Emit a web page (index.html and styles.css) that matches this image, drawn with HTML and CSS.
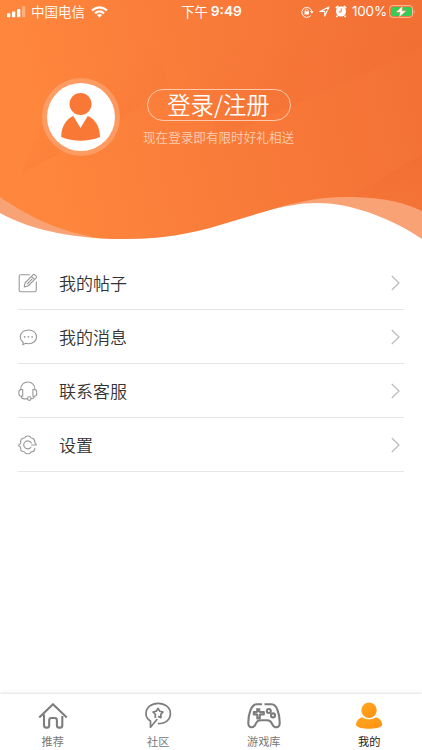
FILE: index.html
```html
<!DOCTYPE html>
<html lang="zh-CN">
<head>
<meta charset="utf-8">
<title>我的</title>
<link rel="stylesheet" href="styles.css">
</head>
<body>
<div class="app">
  <header class="hero">
    <svg class="hero-bg" viewBox="0 0 422 244" preserveAspectRatio="none" aria-hidden="true">
      <defs>
        <linearGradient id="base" gradientUnits="userSpaceOnUse" x1="20" y1="140" x2="410" y2="50">
          <stop offset="0" stop-color="#ff873d"/><stop offset=".5" stop-color="#f97b39"/><stop offset="1" stop-color="#f37135"/>
        </linearGradient>
        <linearGradient id="ray" gradientUnits="userSpaceOnUse" x1="230" y1="40" x2="270" y2="122">
          <stop offset="0" stop-color="#ee6830" stop-opacity="0"/><stop offset="1" stop-color="#ee6830" stop-opacity=".2"/>
        </linearGradient>
        <linearGradient id="fold" gradientUnits="userSpaceOnUse" x1="62" y1="90" x2="91" y2="140">
          <stop offset="0" stop-color="#f16c31" stop-opacity="0"/><stop offset="1" stop-color="#f16c31" stop-opacity=".16"/>
        </linearGradient>
        <linearGradient id="corner" gradientUnits="userSpaceOnUse" x1="380" y1="176" x2="392" y2="205">
          <stop offset="0" stop-color="#ee682e" stop-opacity=".25"/><stop offset="1" stop-color="#ee682e" stop-opacity="0"/>
        </linearGradient>
        <clipPath id="front"><path d="M0 0H422V211C397 199 371 197 345 197C322 197 302 201 280 207L210 228C180 236 155 239 122 239C104 239 94 238 84 235C50 228 20 211 0 197Z"/></clipPath>
      </defs>
      <path fill="#f9a276" d="M0 0H422V239C396 221 354 203 318 203C260 203 208 239 122 239C78 239 32 231 0 213Z"/>
      <g clip-path="url(#front)">
        <path fill="url(#base)" d="M0 0H422V244H0Z"/>
        <path fill="url(#ray)" d="M150 0H422V48L292 106L220 137Z"/>
        <path fill="url(#fold)" d="M60 80L150 40L170 85L120 120L20 175Z"/>
        <path fill="url(#corner)" d="M422 154L350 198L422 212Z"/>
      </g>
    </svg>

    <div class="status">
      <div class="status-left">
        <svg class="signal" width="19" height="12" viewBox="0 0 19 12"><g fill="#fff"><rect y="7.2" width="3.3" height="4" rx=".8"/><rect x="5" y="5.5" width="3.3" height="5.7" rx=".8"/><rect x="10" y="3" width="3.3" height="8.2" rx=".8"/><rect x="15" y=".3" width="3.3" height="10.9" rx=".8" opacity=".35"/></g></svg>
        <span class="carrier">中国电信</span>
        <svg class="wifi" width="17" height="12" viewBox="0 0 17 12"><g fill="none" stroke="#fff" stroke-width="2.2"><path d="M1 4.4Q8.5-1.8 16 4.4"/><path d="M3.9 7.3Q8.5 3.6 13.1 7.3"/></g><path fill="#fff" d="M5.9 9Q8.5 7 11.1 9L8.5 11.7Z"/></svg>
      </div>
      <div class="clock"><span>下午</span><b>9:49</b></div>
      <div class="status-right">
        <svg class="lock" width="13" height="12" viewBox="0 0 13 12"><g fill="none" stroke="#fff"><path d="M9.7 9.6A5 5 0 1 1 10.7 5"/><path d="M4.3 5.7V4.5a1.4 1.4 0 0 1 2.8 0v1.2" stroke-width=".8"/></g><path fill="#fff" d="M3.5 5.3h4.4v3.3H3.5zM8.9 5.2h3.7l-1.8 2.5z"/></svg>
        <svg class="arrow" width="11" height="11" viewBox="0 0 11 11"><path fill="none" stroke="#fff" stroke-width="1.1" stroke-linejoin="round" d="M.8 5.4L10 1 5.7 10.1V5.4Z"/></svg>
        <svg class="alarm" width="12" height="13" viewBox="0 0 12 13"><circle cx="6" cy="6.6" r="5" fill="#fff"/><path d="M.9 3.2L3.3 1M11.1 3.2L8.7 1M2.4 10.8L1.4 12M9.6 10.8l1 1.2" stroke="#fff" stroke-width="1.8"/><path d="M6.2 3.4v3.5H3.5" fill="none" stroke="#f67637"/></svg>
        <span class="percent">100%</span>
        <svg class="battery" width="27" height="13" viewBox="0 0 27 13"><rect x=".6" y=".6" width="23" height="11.8" rx="3.2" fill="none" stroke="#fbc0a0"/><rect x="2" y="2" width="20.2" height="9" rx="1.8" fill="#32cc57"/><path d="M24.8 4.4q1.6 2 0 4.2z" fill="#fbc0a0"/><path fill="#fff" stroke="#f67637" stroke-width=".5" d="M13.8.8L6.8 7.3H11L9.9 12.4 17.4 5.7H13Z"/></svg>
      </div>
    </div>

    <div class="profile">
      <div class="avatar">
        <svg width="68" height="68" viewBox="0 0 68 68"><circle cx="34" cy="34" r="34" fill="#fff"/><g fill="#f97836"><circle cx="33.5" cy="21" r="11"/><path d="M26.3 33L33.5 45 40.8 33C48 36 53 43.5 53 54Q33.5 61.5 14.2 54C14.2 43.5 19.4 36 26.3 33Z"/></g></svg>
      </div>
      <div class="login">
        <a class="login-btn">登录/注册</a>
        <p class="login-tip">现在登录即有限时好礼相送</p>
      </div>
    </div>
  </header>

  <main class="menu">
    <a class="row">
      <svg class="row-icon" viewBox="0 0 20 20"><path d="M11.5 1.8H3Q1.2 1.8 1.2 3.6V17Q1.2 18.8 3 18.8H16.5Q18.3 18.8 18.3 17V9"/><path d="M6.2 13.9L7 10 15.2 1.7Q16 1 16.8 1.8L18.2 3.2Q18.9 4 18.2 4.8L10 13 6.2 13.9ZM13.6 3.4L16.5 6.3M9.4 10.8L14 6.2"/></svg>
      <span class="row-label">我的帖子</span>
      <svg class="chevron" viewBox="0 0 9 16"><path d="M.8 1L8 8 .8 15"/></svg>
    </a>
    <a class="row">
      <svg class="row-icon" viewBox="0 0 20 20"><path d="M5.2 15.2C3.2 13.9 2.2 12 2.2 9.8 2.2 5.9 6 3 10.5 3S18.6 5.9 18.6 9.8 15 16.7 10.5 16.7Q9 16.7 7.7 16.3L4.7 17.7Z"/><path class="dots" d="M6.7 9.8h.01M10.4 9.8h.01M14.1 9.8h.01"/></svg>
      <span class="row-label">我的消息</span>
      <svg class="chevron" viewBox="0 0 9 16"><path d="M.8 1L8 8 .8 15"/></svg>
    </a>
    <a class="row">
      <svg class="row-icon" viewBox="0 0 20 20"><path d="M2.6 8.7C2.6 4.1 5.6 1 9.8 1S17 4.1 17 8.7"/><path d="M4.7 8.5V15.2H3.3Q.9 15.2.9 12.8V10.8Q.9 8.6 3.2 8.5ZM14.9 8.5V15.2H16.3Q18.7 15.2 18.7 12.8V10.8Q18.7 8.6 16.4 8.5ZM3.2 15.2Q3.4 17.9 6.2 17.9H9.4M13.2 17.7Q16.1 17.6 16.4 15.2"/><circle cx="11.3" cy="17.6" r="1.8"/></svg>
      <span class="row-label">联系客服</span>
      <svg class="chevron" viewBox="0 0 9 16"><path d="M.8 1L8 8 .8 15"/></svg>
    </a>
    <a class="row">
      <svg class="row-icon" viewBox="0 0 20 20"><path d="M18.2 10H13.6M18.2 10Q18 8.2 16.8 7.6 17 4 14.3 3.2 12.6 3.4 12 1.6 9.8.5 7.6 1.6 7 3.4 5 3.2 2.5 4 2.6 7.1 3.2 8.5.9 9.8.7 10.2.7 11 2.7 11.5 2.5 13 2.4 15.8 4.7 16.5 6.7 16.3 7.4 18.2 9.8 19.4 12 18.2 12.9 16.3 14.9 16.7 17 15.7 16.8 13.2"/><path d="M13.3 8.1A4 4 0 1 0 12.9 12.3"/></svg>
      <span class="row-label">设置</span>
      <svg class="chevron" viewBox="0 0 9 16"><path d="M.8 1L8 8 .8 15"/></svg>
    </a>
  </main>

  <nav class="tabs">
    <a class="tab">
      <svg class="tab-icon" viewBox="0 0 34 30"><path d="M3.2 17.4L17 4.2 30.8 17.4M8 14.5V25.3Q8 27.6 10.2 27.6H11.2Q13.2 27.6 13.2 25.3V20.3Q13.2 18 15.4 18H18.7Q20.9 18 20.9 20.3V25.3Q20.9 27.6 22.9 27.6H24.2Q26.3 27.6 26.3 25.3V16"/></svg>
      <span>推荐</span>
    </a>
    <a class="tab">
      <svg class="tab-icon thin" viewBox="0 0 34 30"><path d="M17 23.7C24.8 23.7 29.4 19.5 29.4 13.6 29.4 7.5 24 3.3 17.2 3.3S5 7.6 5 13.6C5 17 6.4 19.4 9.5 21V27.2L16.3 19"/><path d="M15 16.7L14.2 17.2 14.4 14.3 12 12 15.3 11.2 17 8.4 18.8 11.2 22 12 19.8 14.4 20 17.6 17 16.4"/></svg>
      <span>社区</span>
    </a>
    <a class="tab">
      <svg class="tab-icon" viewBox="0 0 34 30"><path d="M15 4.3H9.4C4.4 4.3 1.4 13.5 1.3 22.5 1.2 28.4 6.3 28.4 8.4 24.4 10.2 20.7 11.2 20.2 14.8 20.2H19.6C23 20.2 23.7 21.2 25.4 24.4 27.6 28.4 32.8 28.4 32.7 22.5 32.5 13.5 29.8 4.3 24.6 4.3H17.5"/><path d="M12.2 8.3V11.4L13 12H16.8V14.4H13.3L12.8 15V18.4H10.3V15L9.6 14.4H6.8V12H9.6L10.2 11.4V8.3"/><circle cx="21.8" cy="11" r="2"/><circle cx="26" cy="15.4" r="2"/></svg>
      <span>游戏库</span>
    </a>
    <a class="tab tab-active">
      <svg class="tab-icon" viewBox="0 0 34 30"><defs><linearGradient id="me" x1="0" y1="0" x2="1" y2="1"><stop offset="0" stop-color="#ffa722"/><stop offset="1" stop-color="#ff9010"/></linearGradient></defs><circle cx="17" cy="10.3" r="7.7" fill="url(#me)"/><path fill="url(#me)" d="M4 25.2C4 20.4 7.6 17.5 10.4 17.2 14.4 19.9 19.9 19.9 23.8 17.2 26.8 17.6 30.2 20.4 30.2 25.2 27 30 7 30 4 25.2Z"/></svg>
      <span>我的</span>
    </a>
  </nav>
</div>
</body>
</html>
```

FILE: styles.css
```css
* { box-sizing: border-box; }
body {
  margin: 0;
  background: #fff;
  color: #333;
  font-family: "Noto Sans CJK SC", sans-serif;
}
svg { display: block; flex: none; }
.app {
  display: flex;
  flex-direction: column;
  width: 422px;
  height: 750px;
  overflow: hidden;
}
.hero {
  position: relative;
  flex: none;
  height: 244px;
  color: #fff;
}
.hero-bg {
  position: absolute;
  inset: 0;
  width: 100%;
  height: 100%;
}
.status {
  position: relative;
  display: grid;
  grid-template-columns: 1fr auto 1fr;
  align-items: center;
  height: 23px;
  padding: 0 6px 0 7px;
  line-height: 23px;
}
.status-left, .status-right, .clock {
  display: flex;
  align-items: center;
}
.status-right { justify-content: flex-end; }
.carrier { margin: 0 6px 0 5px; font-size: 13.5px; font-weight: 350; }
.clock { gap: 3px; font-size: 13.3px; font-weight: 400; }
.clock b { font: 600 13.7px/23px Inter, sans-serif; }
.arrow { margin-left: 5px; }
.alarm { margin-left: 5px; }
.percent { margin: 0 2px 0 5px; font: 13.5px/23px Inter, sans-serif; letter-spacing: -.2px; }
.profile {
  position: relative;
  display: flex;
  padding: 55px 0 0 42px;
}
.avatar {
  flex: none;
  width: 78px;
  height: 78px;
  padding: 5px;
  border-radius: 50%;
  background: rgba(255, 255, 255, .2);
}
.login {
  display: flex;
  flex-direction: column;
  align-items: center;
  width: 153px;
  margin: 11px 0 0 22px;
}
.login-btn {
  width: 144px;
  height: 32px;
  border: 1px solid #fcc9ad;
  border-radius: 16px;
  font-size: 23.3px;
  font-weight: 350;
  line-height: 29px;
  text-align: center;
}
.login-tip {
  margin: 6px 0 0;
  color: #fdceb4;
  font-size: 12.6px;
  font-weight: 350;
  line-height: 20px;
  white-space: nowrap;
}
.menu {
  flex: 1;
  padding: 12px 18px 0;
}
.row {
  display: flex;
  align-items: center;
  height: 54px;
  padding: 1px 4px 0 0;
  border-bottom: 1px solid #e6e6e6;
}
.row-icon {
  width: 20px;
  height: 20px;
  fill: none;
  stroke: #999;
  stroke-width: 1.1;
  stroke-linecap: round;
  stroke-linejoin: round;
}
.dots { stroke-width: 1.7; }
.row-label {
  flex: 1;
  margin-left: 21px;
  font-size: 17px;
  font-weight: 350;
  line-height: 24px;
}
.chevron {
  width: 9px;
  height: 16px;
  fill: none;
  stroke: #bdbdbd;
  stroke-width: 1.3;
}
.tabs {
  display: grid;
  grid-template-columns: repeat(4, 1fr);
  height: 56px;
  background: #fff;
  box-shadow: 0 -1px 3px rgba(0, 0, 0, .12);
}
.tab {
  display: flex;
  flex-direction: column;
  align-items: center;
  padding-top: 6px;
  color: #777;
  font-size: 11.2px;
  line-height: 16px;
}
.tab span { margin-top: 3px; }
.tab-icon {
  width: 34px;
  height: 30px;
  fill: none;
  stroke: #7d7d7d;
  stroke-width: 2.1;
  stroke-linejoin: round;
}
.thin { stroke-width: 1.7; }
.tab-active { color: #222; }
.tab-active .tab-icon { stroke: none; }
```
